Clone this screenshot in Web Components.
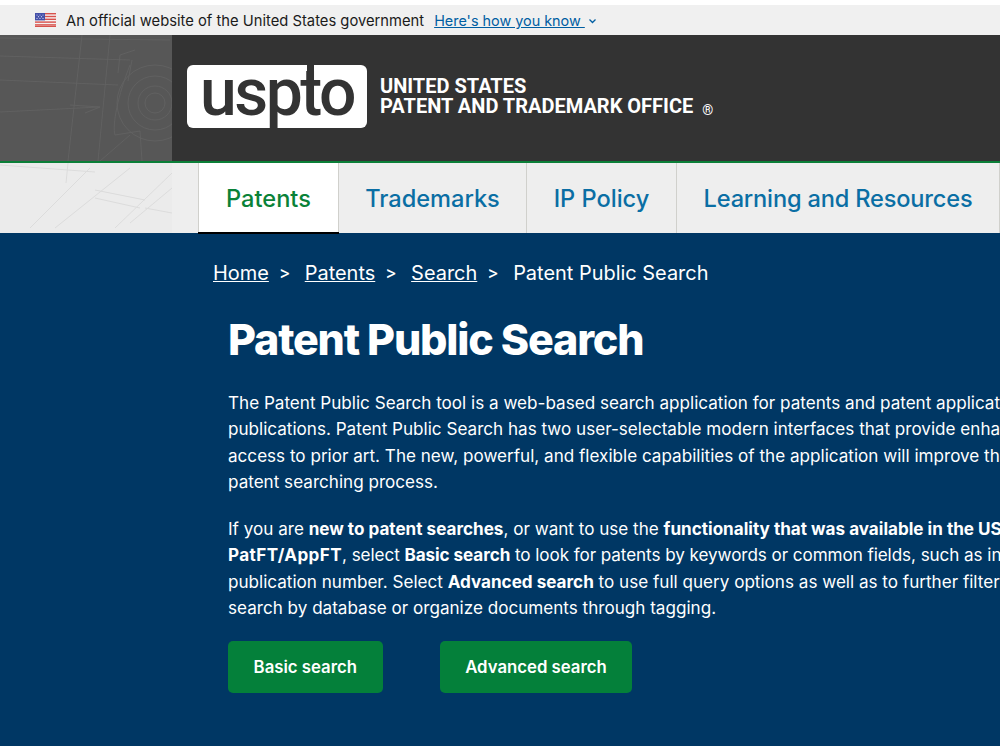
<!DOCTYPE html>
<html lang="en"><head><meta charset="utf-8"><title>Patent Public Search</title>
<style>
html,body{margin:0;padding:0;overflow:hidden;height:746px;background:#003764}
body{font-family:"Inter","Liberation Sans",sans-serif}
</style></head><body>
<gov-banner></gov-banner>
<site-header></site-header>
<main-nav>
<nav-tab active>Patents</nav-tab><nav-tab w="188">Trademarks</nav-tab><nav-tab w="150">IP Policy</nav-tab><nav-tab w="323" style="letter-spacing:-.18px">Learning and Resources</nav-tab>
</main-nav>
<hero-section>
<bread-crumbs slot="crumb"></bread-crumbs>
<h1 slot="title">Patent Public Search</h1>
<p>The Patent Public Search tool is a web-based search application for patents and patent applicat<br>publications. Patent Public Search has two user-selectable modern interfaces that provide enha<br>access to prior art. The new, powerful, and flexible capabilities of the application will improve th<br>patent searching process.</p>
<p>If you are <b>new to patent searches</b>, or want to use the <b>functionality that was available in the US</b><br><b style="letter-spacing:.4px">PatFT/AppFT</b><span style="letter-spacing:-.07px">, select <b>Basic search</b> to look for patents by keywords or common fields, such as in</span><br>publication number. Select <b>Advanced search</b> to use full query options as well as to further filter<br>search by database or organize documents through tagging.</p>
<action-row><green-button>Basic search</green-button><green-button>Advanced search</green-button></action-row>
</hero-section>
<script>
function def(name,html,init){customElements.define(name,class extends HTMLElement{constructor(){super();this.attachShadow({mode:'open'}).innerHTML=html;}connectedCallback(){if(init)init(this)}})}
def('gov-banner',`<style>:host{display:flex;align-items:center;box-sizing:border-box;height:35px;border-top:5px solid #fff;padding:1px 0 0 35px;background:#f0f0f0;font:14.75px "Inter",sans-serif;color:#1b1b1b;white-space:nowrap}
svg{display:block;margin-right:10px;margin-top:-1px}a{color:#005ea2;text-decoration:underline;margin-left:10px;font-size:14.4px}i{font-style:normal;margin-left:3px;display:block}</style>
<svg width="21" height="14" viewBox="0 0 21 14"><rect width="21" height="14" fill="#f5f0f0"/><g fill="#d8524c"><rect width="21" height="1.4"/><rect y="2.8" width="21" height="1.4"/><rect y="5.6" width="21" height="1.4"/><rect y="8.4" width="21" height="1.4"/><rect y="11.2" width="21" height="1.4"/><rect y="12.8" width="21" height="1.2"/></g><rect width="10" height="7.4" fill="#4450a8"/><g fill="#cfd3ee"><circle cx="2" cy="2" r=".6"/><circle cx="5" cy="2" r=".6"/><circle cx="8" cy="2" r=".6"/><circle cx="3.5" cy="3.7" r=".6"/><circle cx="6.5" cy="3.7" r=".6"/><circle cx="2" cy="5.4" r=".6"/><circle cx="5" cy="5.4" r=".6"/><circle cx="8" cy="5.4" r=".6"/></g></svg>
<span>An official website of the United States government</span><a href="#">Here's how you know&nbsp;</a><i><svg width="9" height="6" viewBox="0 0 9 6" style="margin:0"><path d="M1.5 1.5 4.5 4.5 7.5 1.5" fill="none" stroke="#005ea2" stroke-width="1.3"/></svg></i>`);
def('site-header',`<style>:host{display:flex;height:126px;background:#333;overflow:hidden}
.art{flex:0 0 172px;background:#575757;display:block}
.brand{display:flex;align-items:center;padding-left:15px;gap:13px;color:#fff}
.logo{position:relative;display:flex;justify-content:center;align-items:center;box-sizing:border-box;width:180px;height:63px;margin-top:-3px;background:#fff;border-radius:6px}
.logo span{font:500 66px/63px Roboto,sans-serif;color:#333;letter-spacing:-2.5px;margin-top:-8px}
.logo b{position:absolute;left:120px;top:0;width:7px;height:16px;background:#333}
.name{font:700 20px/20px Roboto,sans-serif;white-space:nowrap;margin-top:-5px}
sup{font-size:14px;font-weight:400;margin-left:9px;vertical-align:-2px;line-height:0}</style>
<svg class="art" width="172" height="126" viewBox="0 0 172 126" fill="none" stroke="#626262" stroke-width=".9"><path d="M0 3 170 5M0 21 130 25M0 45 118 50M0 77 100 72M70 70 100 72 85 78M82 0 68 126M110 0 98 126M130 30C118 60 112 90 115 100M100 126 130 100M118 38 120 20 135 15M128 46 132 25M115 100 140 96 142 126"/><circle cx="155" cy="68" r="10"/><circle cx="155" cy="68" r="17"/><circle cx="155" cy="68" r="27"/><circle cx="155" cy="68" r="38"/></svg>
<div class="brand"><div class="logo"><span>uspto</span><b></b></div><div class="name">UNITED STATES<br>PATENT AND TRADEMARK OFFICE<sup>®</sup></div></div>`);
def('main-nav',`<style>:host{display:flex;box-sizing:border-box;height:72px;border-top:2px solid #0b7f38;background:#eee}
.art{flex:0 0 172px;display:block;margin-right:26px;background:#ebebeb}
.tabs{display:flex;flex:none}</style>
<svg class="art" width="172" height="70" viewBox="0 0 172 70" fill="none" stroke="#dcdcdc"><path d="M0 2 95 9M68 0 66 20M90 5 30 65M130 5 55 65M95 27 145 37M95 35 140 45M172 10 115 65M172 25 130 60M145 45 172 50"/></svg>
<div class="tabs"><slot></slot></div>`);
def('nav-tab',`<style>:host{position:relative;display:flex;align-items:center;justify-content:center;box-sizing:border-box;width:141px;height:70px;padding-top:1px;border-right:1px solid #d0d0cc;font:500 23.6px "Inter",sans-serif;color:#0a6ea4;white-space:nowrap}
:host([active]){background:#fff;color:#0a8238;border-left:1px solid #d0d0cc;}
:host([active])::after{content:"";position:absolute;left:-1px;right:-1px;bottom:-1px;height:2px;background:#000}</style><slot></slot>`,el=>{const w=el.getAttribute('w');if(w)el.style.width=w+'px'});
def('bread-crumbs',`<style>:host{display:flex;align-items:center;padding-left:213px;font-size:19.95px;line-height:28px;color:#fff;white-space:nowrap}
a{color:#fff;text-decoration:underline}i{font:500 17px "Inter",sans-serif;margin:0 14.5px 0 10px}</style><a href="#">Home</a><i>&gt;</i><a href="#">Patents</a><i>&gt;</i><a href="#">Search</a><i>&gt;</i><span>Patent Public Search</span>`);
def('hero-section',`<style>:host{display:block;padding-top:26px;color:#fff;font:17.1px/26.4px "Inter",sans-serif}
.c{padding:22px 0 0 228px;width:1000px;box-sizing:border-box;white-space:nowrap}
::slotted(p){margin:0 0 20.4px}
slot[name=title]::slotted(h1){margin:0 0 21px;font:800 43px/60px "Inter",sans-serif;letter-spacing:-1.2px}
</style><slot name="crumb"></slot><div class="c"><slot name="title"></slot><slot></slot></div>`);
def('action-row',`<style>:host{display:flex;gap:57px;margin-top:-1px}</style><slot></slot>`);
def('green-button',`<style>:host{display:block;box-sizing:border-box;padding:0 25.6px;height:52px;border-radius:5px;background:#04803a;color:#fff;font:600 16.75px/52px "Inter",sans-serif}</style><slot></slot>`);
</script>
</body></html>
